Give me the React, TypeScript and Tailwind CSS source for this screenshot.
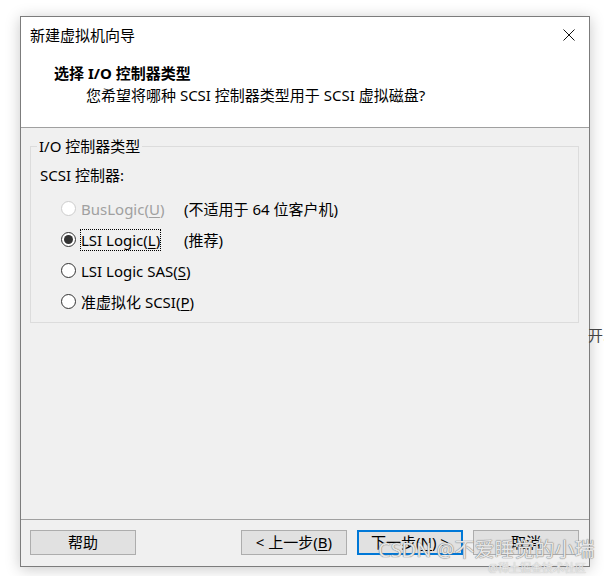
import React from "react";

const font = "font-['Noto_Sans','Noto_Sans_CJK_SC',sans-serif]";

const options = [
  { key: "bus", label: "BusLogic", mn: "U", note: "(不适用于 64 位客户机)", disabled: true },
  { key: "lsi", label: "LSI Logic", mn: "L", note: "(推荐)", checked: true },
  { key: "sas", label: "LSI Logic SAS", mn: "S" },
  { key: "pv", label: "准虚拟化 SCSI", mn: "P" },
];

function Radio({ checked, disabled }: { checked?: boolean; disabled?: boolean }) {
  return (
    <span
      className={`flex items-center justify-center w-[15px] h-[15px] rounded-full border bg-white shrink-0 ${
        disabled ? "border-[#cccccc] bg-[#f7f7f7]" : "border-[#333333]"
      }`}
    >
      {checked && <span className="w-[9px] h-[9px] rounded-full bg-[#333333]" />}
    </span>
  );
}

function Button({ children, focused }: { children: React.ReactNode; focused?: boolean }) {
  return (
    <div
      className={`flex items-center justify-center w-[106px] h-[25px] bg-[#e1e1e1] text-[15px] text-black ${
        focused ? "border-2 border-[#0078d7]" : "border border-[#adadad]"
      }`}
    >
      {children}
    </div>
  );
}

export default function App() {
  return (
    <div className={`relative w-[604px] h-[576px] bg-white overflow-hidden pt-[16px] pl-[20px] ${font}`}>
      <div className="w-[570px] h-[551px] border border-[#7c7c7c] flex flex-col shadow-[0_2px_14px_rgba(0,0,0,0.22)]">
        {/* header */}
        <div className="h-[111px] bg-white border-b border-[#a0a0a0] shrink-0">
          <div className="h-[36px] flex items-center justify-between pl-[9px] pr-[14px]">
            <span className="text-[15px] text-black leading-[20px]">新建虚拟机向导</span>
            <svg width="12" height="12" viewBox="0 0 12 12" className="block">
              <path d="M0.5 0.5 L11.5 11.5 M11.5 0.5 L0.5 11.5" stroke="#111" strokeWidth="1" />
            </svg>
          </div>
          <div className="mt-[10px] pl-[33px] text-[15px] font-bold leading-[20px] text-black">
            选择 I/O 控制器类型
          </div>
          <div className="mt-[2px] pl-[65px] text-[15px] leading-[20px] text-black">
            您希望将哪种 SCSI 控制器类型用于 SCSI 虚拟磁盘?
          </div>
        </div>

        {/* body */}
        <div className="h-[391px] bg-[#f0f0f0] px-[9px] pt-[8px] shrink-0">
          <fieldset className="h-[187px] w-[549px] border border-[#dcdcdc] box-border">
            <legend className="ml-[6px] px-[2px] text-[15px] leading-[20px] text-black">I/O 控制器类型</legend>
            <div className="pl-[9px] text-[15px] leading-[20px] text-black mt-[9px]">SCSI 控制器:</div>
            <div className="mt-[8px] flex flex-col">
              {options.map((o) => (
                <div key={o.key} className="h-[31px] flex items-center pl-[30px] text-[15px] leading-[20px]">
                  <div className="w-[123px] flex items-center gap-[5px] shrink-0">
                    <Radio checked={o.checked} disabled={o.disabled} />
                    <span
                      className={`whitespace-nowrap ${o.disabled ? "text-[#a0a0a0]" : "text-black"} ${
                        o.checked ? "outline outline-1 outline-dotted outline-black" : ""
                      }`}
                    >
                      {o.label}(<span className="underline underline-offset-2">{o.mn}</span>)
                    </span>
                  </div>
                  {o.note && <span className="text-black whitespace-nowrap">{o.note}</span>}
                </div>
              ))}
            </div>
          </fieldset>
        </div>

        {/* footer */}
        <div className="flex-1 bg-[#f0f0f0] border-t border-[#a0a0a0] pt-[10px] pl-[9px] pr-[10px] flex items-start">
          <Button>帮助</Button>
          <div className="flex-1" />
          <div className="flex gap-[10px]">
            <Button>
              &lt; 上一步(<span className="underline underline-offset-2">B</span>)
            </Button>
            <Button focused>
              下一步(<span className="underline underline-offset-2">N</span>) &gt;
            </Button>
            <Button>取消</Button>
          </div>
        </div>
      </div>

      {/* stray desktop text right of dialog */}
      <span className="absolute left-[588px] top-[325px] text-[15px] leading-[20px] text-[#444]">开.</span>

      {/* watermark */}
      <div className="absolute left-[378px] top-[537px] text-[20px] leading-[26px] text-[#e6e6e6] whitespace-nowrap [text-shadow:0_0_1px_#777,0_0_1px_#777]">
        CSDN @不爱睡觉的小瑞
      </div>
      <div className="absolute left-[488px] top-[561px] text-[11px] leading-[14px] text-[#e8e8e8] whitespace-nowrap [text-shadow:0_0_1px_#aaa]">
        @稀土掘金技术社区
      </div>
    </div>
  );
}
